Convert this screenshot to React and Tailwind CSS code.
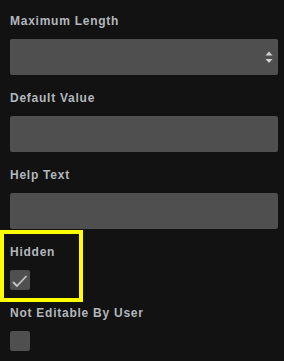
import React from "react";

function Label({ children }) {
  return (
    <div className="h-4 text-[12px] leading-4 font-bold tracking-[0.75px] text-[#b3b7bc] mb-[10px] whitespace-nowrap">
      {children}
    </div>
  );
}

function TextBox({ stepper }) {
  return (
    <div className="h-9 w-full rounded-[2px] bg-[#4f4f4f] flex items-center justify-end pr-[5px]">
      {stepper && (
        <svg width="8" height="13" viewBox="0 0 8 13">
          <polygon points="4,0.5 7.5,4.5 0.5,4.5" fill="#d0d0d0" />
          <polygon points="0.5,8 7.5,8 4,12" fill="#d0d0d0" />
        </svg>
      )}
    </div>
  );
}

function Checkbox({ checked }) {
  return (
    <div className="w-5 h-5 rounded-[2px] bg-[#4f4f4f] flex items-center justify-center">
      {checked && (
        <svg width="20" height="20" viewBox="0 0 20 20">
          <polyline
            points="3.5,12.5 7,16 16,6.5"
            fill="none"
            stroke="#c4c4c4"
            strokeWidth="1.8"
            strokeLinecap="round"
            strokeLinejoin="round"
          />
        </svg>
      )}
    </div>
  );
}

export default function App() {
  return (
    <div
      className="relative w-[284px] h-[361px] bg-[#121212] overflow-hidden pl-[10px] pr-[6px] pt-[13px]"
      style={{ fontFamily: '"Liberation Sans", Arial, sans-serif' }}
    >
      <div className="flex flex-col gap-[15px]">
        <div>
          <Label>Maximum Length</Label>
          <TextBox stepper />
        </div>
        <div>
          <Label>Default Value</Label>
          <TextBox />
        </div>
        <div>
          <Label>Help Text</Label>
          <TextBox />
        </div>
        <div>
          <Label>Hidden</Label>
          <Checkbox checked />
        </div>
        <div>
          <Label>Not Editable By User</Label>
          <Checkbox />
        </div>
      </div>
      <div className="absolute left-0 top-[230px] w-[83px] h-[72px] border-4 border-[#ffff00] pointer-events-none" />
    </div>
  );
}
